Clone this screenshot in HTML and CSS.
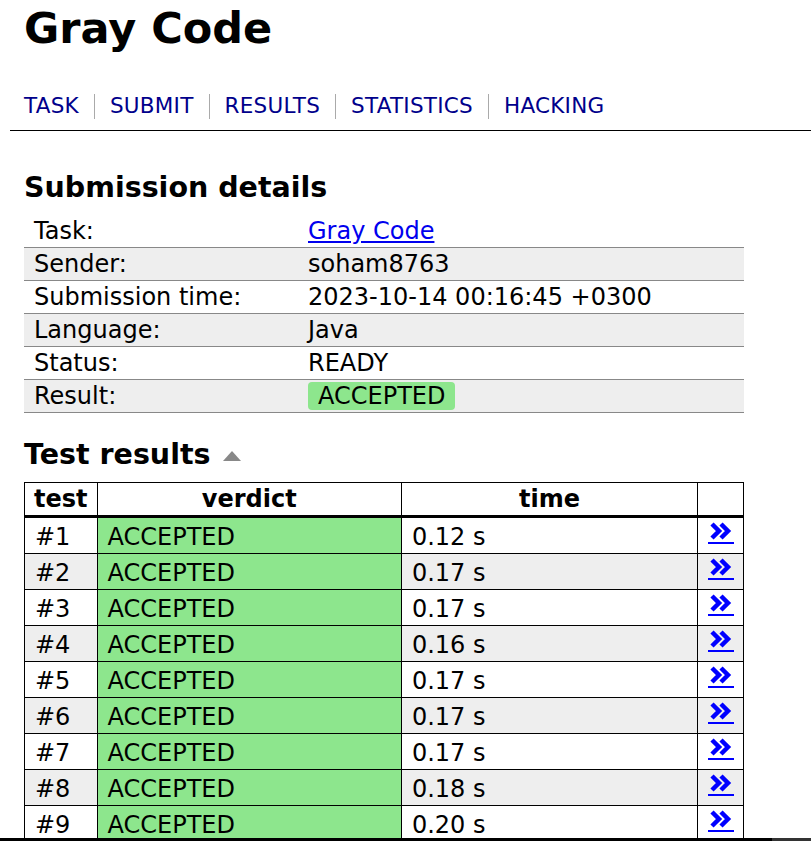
FILE: index.html
```html
<!DOCTYPE html>
<html>
<head>
<meta charset="utf-8">
<link rel="stylesheet" href="styles.css">
</head>
<body>
<div class="header">
  <h1 class="title">Gray Code</h1>
  <nav class="nav">
    <a href="#">TASK</a><span class="sep"></span><a href="#">SUBMIT</a><span class="sep"></span><a href="#">RESULTS</a><span class="sep"></span><a href="#">STATISTICS</a><span class="sep"></span><a href="#">HACKING</a>
  </nav>
</div>
<div class="content">
  <h2 class="section">Submission details</h2>
  <table class="details">
    <tr><td class="lbl">Task:</td><td><a class="tasklink" href="#">Gray Code</a></td></tr>
    <tr><td class="lbl">Sender:</td><td>soham8763</td></tr>
    <tr><td class="lbl">Submission time:</td><td>2023-10-14 00:16:45 +0300</td></tr>
    <tr><td class="lbl">Language:</td><td>Java</td></tr>
    <tr><td class="lbl">Status:</td><td>READY</td></tr>
    <tr><td class="lbl">Result:</td><td><span class="badge">ACCEPTED</span></td></tr>
  </table>
  <h2 class="section tests-h">Test results <span class="tri"></span></h2>
  <table class="tests">
    <thead>
      <tr><th class="c-test">test</th><th class="c-verdict">verdict</th><th class="c-time">time</th><th class="c-link"></th></tr>
    </thead>
    <tbody>
      <tr><td>#1</td><td class="ok">ACCEPTED</td><td>0.12 s</td><td class="lk"><a href="#" class="go"><svg viewBox="0 0 24 18" width="24" height="18"><path d="M3 2 L10 9 L3 16 M12 2 L19 9 L12 16" fill="none" stroke="#0000ff" stroke-width="4.5"/></svg></a></td></tr>
      <tr><td>#2</td><td class="ok">ACCEPTED</td><td>0.17 s</td><td class="lk"><a href="#" class="go"><svg viewBox="0 0 24 18" width="24" height="18"><path d="M3 2 L10 9 L3 16 M12 2 L19 9 L12 16" fill="none" stroke="#0000ff" stroke-width="4.5"/></svg></a></td></tr>
      <tr><td>#3</td><td class="ok">ACCEPTED</td><td>0.17 s</td><td class="lk"><a href="#" class="go"><svg viewBox="0 0 24 18" width="24" height="18"><path d="M3 2 L10 9 L3 16 M12 2 L19 9 L12 16" fill="none" stroke="#0000ff" stroke-width="4.5"/></svg></a></td></tr>
      <tr><td>#4</td><td class="ok">ACCEPTED</td><td>0.16 s</td><td class="lk"><a href="#" class="go"><svg viewBox="0 0 24 18" width="24" height="18"><path d="M3 2 L10 9 L3 16 M12 2 L19 9 L12 16" fill="none" stroke="#0000ff" stroke-width="4.5"/></svg></a></td></tr>
      <tr><td>#5</td><td class="ok">ACCEPTED</td><td>0.17 s</td><td class="lk"><a href="#" class="go"><svg viewBox="0 0 24 18" width="24" height="18"><path d="M3 2 L10 9 L3 16 M12 2 L19 9 L12 16" fill="none" stroke="#0000ff" stroke-width="4.5"/></svg></a></td></tr>
      <tr><td>#6</td><td class="ok">ACCEPTED</td><td>0.17 s</td><td class="lk"><a href="#" class="go"><svg viewBox="0 0 24 18" width="24" height="18"><path d="M3 2 L10 9 L3 16 M12 2 L19 9 L12 16" fill="none" stroke="#0000ff" stroke-width="4.5"/></svg></a></td></tr>
      <tr><td>#7</td><td class="ok">ACCEPTED</td><td>0.17 s</td><td class="lk"><a href="#" class="go"><svg viewBox="0 0 24 18" width="24" height="18"><path d="M3 2 L10 9 L3 16 M12 2 L19 9 L12 16" fill="none" stroke="#0000ff" stroke-width="4.5"/></svg></a></td></tr>
      <tr><td>#8</td><td class="ok">ACCEPTED</td><td>0.18 s</td><td class="lk"><a href="#" class="go"><svg viewBox="0 0 24 18" width="24" height="18"><path d="M3 2 L10 9 L3 16 M12 2 L19 9 L12 16" fill="none" stroke="#0000ff" stroke-width="4.5"/></svg></a></td></tr>
      <tr><td>#9</td><td class="ok">ACCEPTED</td><td>0.20 s</td><td class="lk"><a href="#" class="go"><svg viewBox="0 0 24 18" width="24" height="18"><path d="M3 2 L10 9 L3 16 M12 2 L19 9 L12 16" fill="none" stroke="#0000ff" stroke-width="4.5"/></svg></a></td></tr>
    </tbody>
  </table>
</div>
<div class="bottombar"><div class="bb-dark"></div><div class="bb-gray"></div></div>
</body>
</html>
```
FILE: styles.css
```css
html, body {
  margin: 0;
  padding: 0;
  background: #fff;
  color: #000;
  font-family: "DejaVu Sans", Verdana, sans-serif;
  overflow: hidden;
}
.header {
  margin-left: 10px;
  padding-left: 14px;
  border-bottom: 1px solid #000;
}
.title {
  margin: 0;
  padding-top: 3px;
  font-size: 43px;
  line-height: 50px;
  font-weight: bold;
}
.nav {
  display: flex;
  align-items: center;
  padding-top: 40px;
  height: 26px;
  padding-bottom: 11px;
  font-size: 21.5px;
}
.nav a {
  color: #00008b;
  text-decoration: none;
  line-height: 26px;
  letter-spacing: 0.25px;
}
.sep {
  display: inline-block;
  width: 1px;
  height: 25px;
  background: #aaa;
  margin: 0 15px;
}
.content {
  padding-left: 24px;
  width: 720px;
}
.section {
  margin: 0;
  font-size: 28.5px;
  font-weight: bold;
  line-height: 34px;
  padding-top: 40px;
  padding-bottom: 10px;
}
.tests-h {
  padding-top: 25px;
  padding-bottom: 10px;
  display: flex;
  align-items: center;
}
.tri {
  display: inline-block;
  width: 0;
  height: 0;
  border-left: 9px solid transparent;
  border-right: 9px solid transparent;
  border-bottom: 10px solid #888;
  margin-left: 12px;
  margin-top: 2px;
}
.details {
  width: 720px;
  border-collapse: collapse;
  font-size: 24px;
}
.details td {
  height: 32px;
  padding: 0 10px;
  line-height: 28px;
  border-top: 1px solid #888;
  border-bottom: 1px solid #888;
  vertical-align: middle;
}
.details tr:first-child td {
  border-top: none;
}
.details tr:nth-child(even) td {
  background: #eee;
}
.details .lbl {
  width: 254px;
}
.tasklink {
  color: #0000ee;
  text-decoration: underline;
}
.badge {
  display: inline-block;
  background: #8de68d;
  border-radius: 4px;
  padding: 0 10px;
  line-height: 28px;
}
.tests {
  width: 720px;
  border-collapse: collapse;
  font-size: 24px;
}
.tests th, .tests td {
  border: 1px solid #000;
  padding: 0 10px;
  height: 35px;
  line-height: 28px;
  text-align: left;
  vertical-align: middle;
}
.tests td {
  padding-top: 2px;
  padding-bottom: 0;
  height: 33px;
}
.tests th {
  text-align: center;
  font-weight: bold;
  height: 32px;
  border-bottom: 3px solid #000;
}
.tests th.c-test { width: 52px; padding: 0 9px; }
.tests .c-verdict { width: 284px; }
.tests .c-time { width: 276px; }
.tests .c-link { width: 25px; }
.tests tbody tr:nth-child(even) td {
  background: #eee;
}
.tests td.ok, .tests tbody tr:nth-child(even) td.ok {
  background: #8de68d;
}
.tests td.lk {
  text-align: center;
  padding: 0 8px;
}
.go {
  display: inline-block;
  border-bottom: 2px solid #0000ff;
  line-height: 0;
  padding: 0 1px 2px;
}
.go svg {
  display: block;
}
.bottombar {
  position: fixed;
  left: 0;
  right: 0;
  bottom: 0;
  height: 3px;
  display: flex;
}
.bb-dark {
  width: 772px;
  background: #000;
}
.bb-gray {
  flex: 1;
  background: #333;
}
```
